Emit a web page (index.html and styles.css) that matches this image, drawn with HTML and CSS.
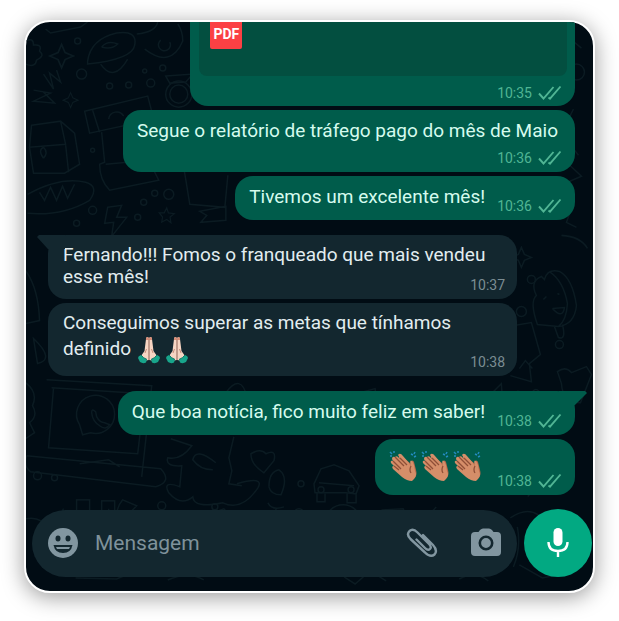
FILE: index.html
```html
<!DOCTYPE html>
<html lang="pt-BR">
<head>
    <meta charset="UTF-8">
    <meta name="viewport" content="width=device-width, initial-scale=1.0">
    <title>Conversa</title>
    <link rel="stylesheet" href="styles.css">
</head>
<body>
    <!-- shared icons -->
    <svg class="sprite" aria-hidden="true">
        <symbol id="checks" viewBox="0 0 24 16">
            <path d="M1 8.500L5.500 13.500L15.500 2M10.500 12.500L12 13.700L22.500 1.500" fill="none" stroke="currentColor" stroke-width="1.900"/>
        </symbol>
        <symbol id="pray" viewBox="0 0 22 28">
            <path d="M8 3Q8 1 9.500 1Q10.800 1 10.800 3V24L5 25L3 20L6.500 15Z" fill="#f6d5c3"/>
            <path d="M14 3Q14 1 12.500 1Q11.200 1 11.200 3V24L17 25L19 20L15.500 15Z" fill="#f6d5c3"/>
            <path d="M8 3Q8 1 9.500 1Q10.800 1 10.800 3V4H8ZM14 3Q14 1 12.500 1Q11.200 1 11.200 3V4H14Z" fill="#d98d77"/>
            <path d="M11 3V24M8.500 13L7 17M13.500 13L15 17" fill="none" stroke="#b97866" stroke-width=".8"/>
            <path d="M3 19Q0 20 0 22L2 26Q5 28 8 26.500L9 23.500Q5 22 3 19Z" fill="#18a58b"/>
            <path d="M19 19Q22 20 22 22L20 26Q17 28 14 26.500L13 23.500Q17 22 19 19Z" fill="#18a58b"/>
            <path d="M3 19Q5 22 9 23.500M19 19Q17 22 13 23.500" fill="none" stroke="#087665" stroke-width="1"/>
        </symbol>
        <symbol id="clap" viewBox="0 0 28 34">
            <path d="M10 8Q12 5 14 8L22 15Q23 9 25 13L27 21Q29 28 23 31L14 27Z" fill="#b9694b"/>
            <path d="M6 8Q8 6 10 9L12 11L9 6Q11 3 14 7L20 14L22 18Q20 10 23 12Q25 14 26 22Q29 27 23 32Q18 32 13 28L4 20Q2 17 5 17L2 14Q1 11 4 12L3 10Q3 7 6 8Z" fill="#d58e69"/>
            <path d="M4 12L12 20M6 8L15 17M11 9L18 16M5 17L10 21M22 17Q20 21 22 24" fill="none" stroke="#8f4f37" stroke-width="1.300"/>
            <path d="M1 3L3 5M5 2L5 4M1 7H3M22 5L24 6M26 3L25 5M25 8L27 7" fill="none" stroke="#238bc0" stroke-width="1.500"/>
        </symbol>
        <symbol id="star" viewBox="0 0 24 24">
            <path d="M12 2L15 9L22 12L15 15L12 22L9 15L2 12L9 9Z"/>
        </symbol>
        <symbol id="star5" viewBox="0 0 24 24">
            <path d="M12 3L14 9L21 10L16 14L17 21L12 17L6 20L7 14L3 9L9 9Z"/>
        </symbol>
    </svg>

    <main class="phone">
        <!-- wallpaper doodles -->
        <svg class="wallpaper" viewBox="0 0 567 568" preserveAspectRatio="xMidYMid slice" aria-hidden="true">
            <g id="doodles">
                <path d="M20 7L25 11L55 5L62 0M62 39Q65 17 91 11Q112 8 109 23Q107 37 62 42ZM76 25Q82 18 92 22Q86 28 76 25M75 42Q88 61 102 37M119 27Q145 47 157 19Q157 9 152 2M135 18A6 6 0 1 0 144 20M111 12Q130 10 132 0"/>
                <path d="M0 19Q8 15 8 23Q17 22 14 29Q20 34 11 38Q10 46 0 42M18 52L28 67L24 51L35 60L31 48M8 68L25 71L8 79L29 81L18 70"/>
                <circle cx="52" cy="19" r="3"/><circle cx="56" cy="52" r="5"/><circle cx="84" cy="64" r="3"/><circle cx="103" cy="63" r="3"/><circle cx="125" cy="61" r="4"/><circle cx="137" cy="46" r="3"/><circle cx="119" cy="49" r="2"/><circle cx="67" cy="128" r="2"/>
                <path d="M6 103L35 99L40 122L4 125ZM4 125L8 151L39 151L54 142L49 111L35 99M18 136Q12 128 18 125Q23 130 18 136M40 122L43 150"/>
                <path d="M59 89L122 74L128 97L64 111ZM67 88L74 110M83 97A8 8 0 0 1 98 94M76 110L79 140L74 142Q74 158 84 168L133 158L123 138L80 142"/>
                <circle cx="153" cy="72" r="13"/><circle cx="153" cy="72" r="9"/><path d="M140 54L167 52L160 60L144 61Z"/>
                <path d="M2 172Q35 154 60 160Q74 164 64 178Q37 194 2 191M14 170L19 178L25 165L31 178L37 164L42 176L49 162"/>
                <path d="M82 185L96 183L91 195L101 195L86 214L88 200L79 201ZM158 145L164 182L199 185L202 153M174 189L200 184L200 198L175 200L181 193Z"/>
                <use href="#star" x="22" y="20" width="28" height="28"/><use href="#star" x="36" y="69" width="18" height="18"/><use href="#star5" x="131" y="183" width="20" height="20"/>
                <circle cx="129" cy="171" r="3"/><circle cx="143" cy="172" r="5"/><circle cx="118" cy="180" r="3"/><circle cx="67" cy="188" r="4"/><circle cx="51" cy="201" r="3"/><circle cx="112" cy="195" r="3"/>
                <path d="M0 248Q13 266 14 298L0 301M8 316Q30 337 12 341ZM0 360Q13 370 7 383Q13 393 4 400L9 410L0 416"/>
                <path d="M21 357L126 363L116 454M26 365L119 371L112 431L23 425L28 365M1 433L135 446Q147 459 130 464L5 449Q-2 444 1 433M54 441L83 437L94 444"/>
                <path d="M57 412L54 402A19 19 0 1 1 65 410ZM66 390Q66 385 70 389L71 394Q74 400 79 400L84 402Q80 408 74 403Q67 399 66 390Z"/>
                <path d="M145 416L166 423Q155 438 142 435Q139 444 156 443L154 464Q136 457 143 470Q155 484 167 474Q168 486 197 480Q216 489 232 465Q239 453 211 461M190 440Q170 424 167 437Q174 447 187 447M208 414L203 435L206 448L203 461L216 463"/>
                <path d="M225 431Q235 425 240 431Q251 426 248 438L238 450Q225 442 225 431ZM243 464Q243 449 253 447Q263 454 255 472Q245 472 243 464M242 480Q246 488 258 484M250 485V495"/>
                <rect x="51" y="477" width="13" height="13"/><rect x="76" y="478" width="13" height="13"/>
                <path d="M57 490L68 490V502L83 500V486M96 505Q86 490 97 477L111 483L102 492L110 500M0 496Q16 493 22 506"/>
                <use href="#star5" x="28" y="484" width="19" height="19"/>
                <circle cx="12" cy="453" r="4"/><circle cx="29" cy="455" r="3"/><circle cx="136" cy="483" r="4"/><circle cx="275" cy="461" r="3"/><circle cx="273" cy="491" r="5"/><circle cx="189" cy="484" r="3"/>
                <path d="M288 461L295 446L308 442L323 448L333 463L330 471L320 470L289 470ZM293 460L328 463M291 470V479H299V471M321 471V480H330V470"/>
                <circle cx="295" cy="467" r="3"/><circle cx="325" cy="467" r="3"/><circle cx="317" cy="500" r="18"/><path d="M311 491L324 500L311 508ZM347 506L356 487L377 486L386 505M366 504Q397 501 410 484M402 495L434 488"/>
                <path d="M518 257Q521 246 533 249Q546 256 550 283Q548 302 532 304L511 302Q503 279 510 273Q503 259 515 254ZM524 250Q537 259 541 281Q540 298 532 304M528 304L532 315Q540 318 536 302M526 286L538 285Q536 297 526 286M517 277L520 274M531 271L533 272"/>
                <path d="M482 304L505 300L514 332L503 341L505 359L484 353M493 346L499 338L506 346M531 349Q539 343 545 350L560 344L565 352L554 380Q536 380 535 361Z"/>
                <path d="M491 389Q484 363 496 370L502 378Q508 360 514 371L515 390Q526 370 535 381L519 398L490 397ZM480 445Q497 424 509 434L515 420L525 434L541 429L530 448L541 463L517 458L502 473L501 454Z"/>
                <use href="#star" x="483" y="223" width="24" height="24"/><circle cx="505" cy="257" r="4"/><circle cx="486" cy="258" r="3"/><circle cx="495" cy="289" r="5"/><circle cx="550" cy="50" r="8"/><circle cx="533" cy="322" r="4"/>
                <path d="M547 0L538 12L555 26M547 87Q533 111 552 133M539 139L555 154L541 160M547 181L540 200L550 205M535 213Q554 214 561 226M300 222Q315 207 330 219L334 233M312 224L319 223M368 216L384 219L385 229H407L408 217M421 219L440 215L451 232M330 371L349 366L351 386L337 384ZM457 379L475 361L477 389M200 370Q215 350 221 374"/>
                <path d="M181 492L198 486L209 498L191 504ZM484 495Q500 484 512 492M491 504Q495 525 487 544M50 555L91 556L110 548M142 557Q163 548 178 557M318 554L329 561L344 548L360 558M433 556Q449 547 462 558M493 542L516 555L540 550"/>
            </g>
        </svg>

        <section class="chat">
            <div class="bubble sent file">
                <div class="attachment"><span class="pdf">PDF</span></div>
                <span class="time">10:35 <svg><use href="#checks"/></svg></span>
            </div>
            <div class="bubble sent stacked">
                <p>Segue o relatório de tráfego pago do mês de Maio</p>
                <span class="time">10:36 <svg><use href="#checks"/></svg></span>
            </div>
            <div class="bubble sent">
                <p>Tivemos um excelente mês!</p>
                <span class="time">10:36 <svg><use href="#checks"/></svg></span>
            </div>

            <div class="bubble received first">
                <p>Fernando!!! Fomos o franqueado que mais vendeu esse mês!</p>
                <span class="time">10:37</span>
            </div>
            <div class="bubble received">
                <p>Conseguimos superar as metas que tínhamos definido
                    <svg class="pray" role="img" aria-label="mãos juntas"><use href="#pray"/></svg>
                    <svg class="pray" role="img" aria-label="mãos juntas"><use href="#pray"/></svg>
                </p>
                <span class="time">10:38</span>
            </div>

            <div class="bubble sent first">
                <p>Que boa notícia, fico muito feliz em saber!</p>
                <span class="time">10:38 <svg><use href="#checks"/></svg></span>
            </div>
            <div class="bubble sent">
                <p class="claps">
                    <svg role="img" aria-label="palmas"><use href="#clap"/></svg>
                    <svg role="img" aria-label="palmas"><use href="#clap"/></svg>
                    <svg role="img" aria-label="palmas"><use href="#clap"/></svg>
                </p>
                <span class="time">10:38 <svg><use href="#checks"/></svg></span>
            </div>
        </section>

        <form class="composer">
            <div class="field">
                <button type="button" aria-label="Emoji">
                    <svg viewBox="0 0 32 32">
                        <circle cx="16" cy="16" r="15" fill="#8296a0"/>
                        <ellipse cx="11" cy="11.500" rx="2.500" ry="3" fill="#13272f"/>
                        <ellipse cx="21" cy="11.500" rx="2.500" ry="3" fill="#13272f"/>
                        <path d="M6.500 18H25.500Q24 26 16 26Q8 26 6.500 18Z" fill="#13272f"/>
                        <path d="M9 20H23L22 22H10Z" fill="#8296a0"/>
                    </svg>
                </button>
                <input type="text" placeholder="Mensagem" aria-label="Mensagem">
                <button type="button" aria-label="Anexar">
                    <svg viewBox="0 0 32 32">
                        <path d="M17 7L27 17Q32 22.500 28.500 26.500Q24.500 30 19 24.500L4.500 11Q0 6.500 3.500 3Q7 0 11.500 4.500L23 16Q26 19 24 21Q22 23 19 20L10.500 11.500" transform="translate(0 1)" fill="none" stroke="#8296a0" stroke-width="2.400" stroke-linecap="round" stroke-linejoin="round"/>
                    </svg>
                </button>
                <button type="button" aria-label="Câmera">
                    <svg viewBox="0 0 32 32">
                        <path d="M5 5H8.500L10 3Q11.500 1.500 13 1.500H19Q20.500 1.500 22 3L23.500 5H27Q31 5 31 9V25Q31 29 27 29H5Q1 29 1 25V9Q1 5 5 5Z" fill="#8296a0"/>
                        <circle cx="16" cy="16" r="6.200" fill="none" stroke="#13272f" stroke-width="2.600"/>
                    </svg>
                </button>
            </div>
            <button type="button" class="mic" aria-label="Gravar áudio">
                <svg viewBox="0 0 32 32">
                    <rect x="11.500" y="1" width="9" height="18" rx="4.500" fill="#fff"/>
                    <path d="M6.500 15Q6.500 24 16 24Q25.500 24 25.500 15M16 24V30" fill="none" stroke="#fff" stroke-width="2.400"/>
                </svg>
            </button>
        </form>
    </main>
</body>
</html>
```
FILE: styles.css
```css
* {
    box-sizing: border-box;
}
body {
    margin: 0;
    padding: 20px 24px 28px;
    background: #fff;
    font-family: Roboto, sans-serif;
}
p {
    margin: 0;
}
svg {
    flex-shrink: 0;
}
.sprite {
    display: none;
}
.phone {
    position: relative;
    background: #010c14;
    border: 2px solid #fff;
    border-radius: 26px;
    overflow: hidden;
    box-shadow: 0 4px 22px rgba(0, 0, 0, 0.4);
}
.wallpaper {
    position: absolute;
    inset: 0;
    width: 100%;
    height: 100%;
    fill: none;
    stroke: #0b1b22;
    stroke-width: 1.5;
}
.chat {
    position: relative;
    display: flex;
    flex-direction: column;
    align-items: flex-end;
    gap: 4px;
    padding: 0 18px 14px 22px;
}
.bubble {
    position: relative;
    display: grid;
    max-width: 89%;
    border-radius: 18px;
    font-size: 19px;
    line-height: 22px;
}
.sent {
    grid-template-columns: auto auto;
    column-gap: 12px;
    padding: 10px 13px 5px 14px;
    background: #005c4b;
    color: #d5fbee;
}
.sent p {
    padding-bottom: 7px;
}
.received {
    align-self: flex-start;
    padding: 9px 12px 5px 15px;
    background: #13272f;
    color: #e2edf0;
}
.received p {
    padding-bottom: 6px;
}
/* message and hour share one cell, the hour sits in its corner */
.received p,
.received .time {
    grid-area: 1 / 1;
}
.first {
    margin-top: 11px;
}
.first::before {
    content: "";
    position: absolute;
    top: 0;
    width: 28px;
    height: 14px;
    background: inherit;
}
.sent.first::before {
    right: -12px;
    clip-path: polygon(0 0, 93% 0, 100% 14%, 57% 100%, 0 100%);
}
.received.first::before {
    left: -11px;
    clip-path: polygon(0 14%, 7% 0, 100% 0, 100% 100%, 39% 100%);
}
.stacked {
    grid-template-columns: auto;
}
.stacked p {
    padding-right: 4px;
}
.file {
    grid-template-columns: auto;
    width: 73%;
    padding: 0 13px 4px 9px;
    border-radius: 0 0 18px 18px;
}
.attachment {
    height: 54px;
    margin: 0 -5px 8px 0;
    padding-left: 11px;
    background: #034f40;
    border-radius: 0 0 8px 8px;
}
.pdf {
    display: block;
    width: 32px;
    height: 27px;
    border-radius: 0 0 2px 2px;
    background: #fb4044;
    color: #fff;
    font-size: 14px;
    font-weight: 700;
    line-height: 25px;
    text-align: center;
}
.time {
    display: flex;
    align-items: center;
    align-self: end;
    justify-self: end;
    gap: 6px;
    font-size: 14px;
    line-height: 18px;
    color: #7b8d93;
}
.sent .time {
    color: #50b594;
}
.time svg {
    width: 24px;
    height: 16px;
}
.pray {
    width: 22px;
    height: 30px;
    margin: 1px 0 0 2px;
    vertical-align: middle;
}
.claps {
    display: flex;
    gap: 4px;
    padding-right: 4px;
}
.claps svg {
    width: 28px;
    height: 34px;
}
.composer {
    position: relative;
    display: flex;
    align-items: center;
    gap: 7px;
    padding: 0 1px 14px 6px;
}
.field {
    flex: 1;
    display: flex;
    align-items: center;
    min-width: 0;
    height: 67px;
    padding: 0 15px;
    border-radius: 34px;
    background: #13272f;
}
button {
    padding: 0;
    border: none;
    background: none;
    cursor: pointer;
}
.field button,
.field svg,
.mic svg {
    display: block;
    width: 32px;
    height: 32px;
}
.field button + button {
    margin-left: 32px;
}
input {
    flex: 1;
    min-width: 0;
    padding: 0 16px;
    border: none;
    outline: none;
    background: none;
    color: #e2edf0;
    font-family: inherit;
    font-size: 21px;
}
input::placeholder {
    color: #7f929b;
    opacity: 1;
}
.mic {
    display: grid;
    place-items: center;
    width: 68px;
    height: 68px;
    border-radius: 50%;
    background: #02a982;
}
```
